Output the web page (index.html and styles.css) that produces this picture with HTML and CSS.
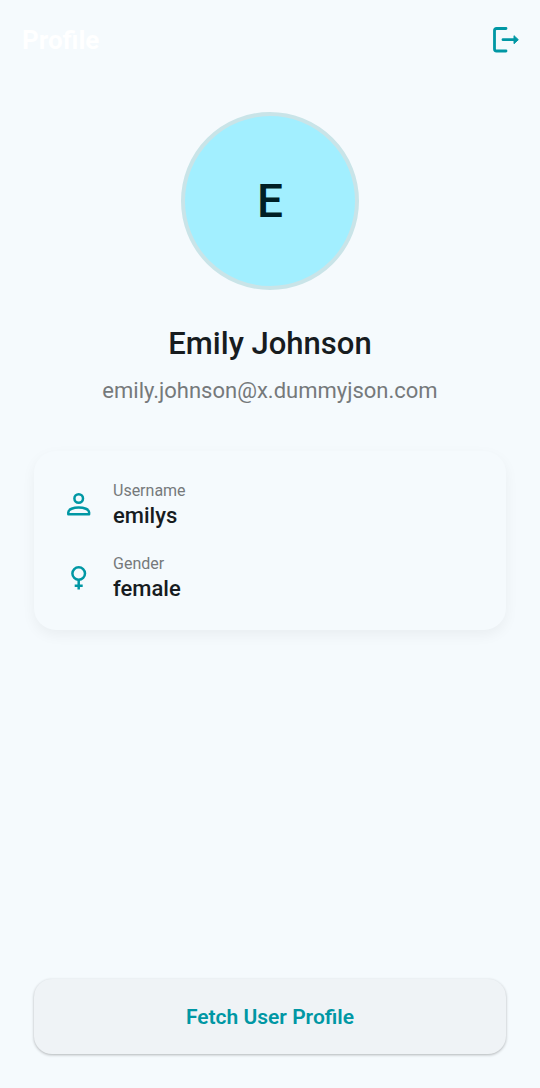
FILE: index.html
```html
<!DOCTYPE html>
<html lang="en">
<head>
<meta charset="utf-8">
<meta name="viewport" content="width=device-width, initial-scale=1">
<title>Profile</title>
<link rel="stylesheet" href="styles.css">
</head>
<body>
<div class="screen">
  <header class="app-bar">
    <h1 class="app-title">Profile</h1>
    <button class="logout" type="button" aria-label="Log out">
      <svg class="icon" viewBox="0 0 32 32" aria-hidden="true">
        <path d="M16 4.5H6.5Q4.500 4.500 4.500 6.500V25Q4.500 27 6.500 27H16" fill="none" stroke="currentColor" stroke-width="2.8" stroke-linecap="round"/>
        <path d="M13 15.700H25" fill="none" stroke="currentColor" stroke-width="2.8" stroke-linecap="round"/>
        <path d="M24 11.700 28.300 15.700 24 19.700Z" fill="currentColor" stroke="currentColor" stroke-linejoin="round"/>
      </svg>
    </button>
  </header>
  <main class="content">
    <div class="avatar">E</div>
    <h2 class="name">Emily Johnson</h2>
    <p class="email">emily.johnson@x.dummyjson.com</p>
    <dl class="card">
      <div class="row">
        <svg class="icon" viewBox="0 0 32 32" aria-hidden="true">
          <circle cx="15.700" cy="10.500" r="4.300" fill="none" stroke="currentColor" stroke-width="2.500"/>
          <path d="M5.300 26.300V24.300C5.300 21.300 10.500 19.500 15.700 19.500S26.100 21.300 26.100 24.300V26.300Z" fill="none" stroke="currentColor" stroke-width="2.500" stroke-linejoin="round"/>
        </svg>
        <div class="field">
          <dt class="label">Username</dt>
          <dd class="value">emilys</dd>
        </div>
      </div>
      <div class="row">
        <svg class="icon" viewBox="0 0 32 32" aria-hidden="true">
          <circle cx="15.700" cy="12.500" r="6.300" fill="none" stroke="currentColor" stroke-width="2.500"/>
          <path d="M15.700 19V28.500M11.700 24.700H19.700" fill="none" stroke="currentColor" stroke-width="2.500"/>
        </svg>
        <div class="field">
          <dt class="label">Gender</dt>
          <dd class="value">female</dd>
        </div>
      </div>
    </dl>
  </main>
  <footer class="actions">
    <button class="fetch" type="button">Fetch User Profile</button>
  </footer>
</div>
</body>
</html>
```
FILE: styles.css
```css
* {
  box-sizing: border-box;
}

body {
  margin: 0;
  background: #f5fafd;
  color: #171c1f;
  font-family: Roboto, "Noto Sans", sans-serif;
}

h1, h2, p, dl, dd {
  margin: 0;
}

.screen {
  display: flex;
  flex-direction: column;
  min-height: 100vh;
}

.app-bar {
  display: flex;
  align-items: center;
  justify-content: space-between;
  height: 80px;
  padding: 0 18px 0 22px;
}

.app-title {
  color: #ffffff;
  font-size: 26px;
  font-weight: 700;
  line-height: 32px;
}

.logout {
  display: flex;
  padding: 0;
  border: 0;
  background: none;
  color: #0097a4;
}

.icon {
  flex: none;
  width: 32px;
  height: 32px;
}

.content {
  display: flex;
  flex: 1;
  flex-direction: column;
  align-items: center;
  padding: 32px 34px;
}

.avatar {
  display: flex;
  align-items: center;
  justify-content: center;
  width: 178px;
  height: 178px;
  border: 4px solid #c9e4e8;
  border-radius: 50%;
  background: #a2efff;
  color: #001f24;
  font-size: 46px;
  font-weight: 500;
}

.name {
  margin-top: 32px;
  font-size: 31px;
  font-weight: 500;
  line-height: 44px;
}

.email {
  margin-top: 9px;
  color: #75797b;
  font-size: 22px;
  line-height: 32px;
}

.card {
  display: flex;
  flex-direction: column;
  gap: 23px;
  width: 100%;
  margin-top: 44px;
  padding: 28px 29px;
  border-radius: 22px;
  background: #f5fafd;
  box-shadow: 0 5px 14px rgb(0 0 0 / 5%);
}

.row {
  display: flex;
  align-items: center;
  gap: 18px;
  color: #0097a4;
}

.label {
  color: #75797b;
  font-size: 16px;
  line-height: 24px;
}

.value {
  color: #171c1f;
  font-size: 22px;
  font-weight: 500;
  line-height: 26px;
}

.actions {
  padding: 0 34px 34px;
}

.fetch {
  width: 100%;
  height: 75px;
  border: 0;
  border-radius: 18px;
  background: #eff3f6;
  box-shadow: 0 1px 3px rgb(0 0 0 / 28%);
  color: #0097a4;
  font-family: inherit;
  font-size: 21px;
  font-weight: 600;
}
```
